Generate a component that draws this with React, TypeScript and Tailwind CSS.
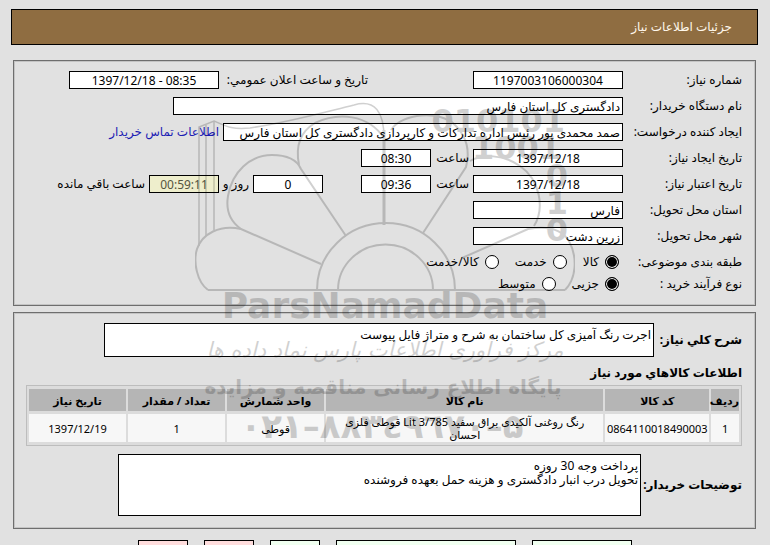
import type { ReactNode } from "react";

const box = "h-[18px] border border-black bg-white px-0.5 leading-4 outline-none";
const area =
  "block resize-none overflow-hidden border border-black bg-white px-0.5 py-1 leading-[14px] outline-none";
const panel =
  "mx-0.5 border border-[#6e6e6e] px-3 pt-[10px] shadow-[inset_0_0_0_1px_#c4c4c4]";

const Row = ({ id, label, children }: { id: string; label: string; children: ReactNode }) => (
  <div className="flex h-[18px] items-center gap-1 whitespace-nowrap">
    <label htmlFor={id} className="w-[115px] shrink-0">
      {label}
    </label>
    {children}
  </div>
);

const Radios = ({ title, name, options }: { title: string; name: string; options: string[] }) => (
  <div role="radiogroup" aria-label={title} className="flex h-[18px] items-center whitespace-nowrap">
    <span className="w-[123px] shrink-0">{title}</span>
    <div className="flex gap-4">
      {options.map((option, i) => (
        <label key={option} className="flex items-center gap-1.5">
          <input
            type="radio"
            name={name}
            defaultChecked={i === 0}
            className="size-[14px] appearance-none rounded-full border border-black bg-white checked:bg-black checked:shadow-[inset_0_0_0_1px_#fff]"
          />
          {option}
        </label>
      ))}
    </div>
  </div>
);

const Watermark = () => (
  <svg
    aria-hidden="true"
    direction="ltr"
    className="pointer-events-none absolute left-1/2 top-[95px] -translate-x-1/2 font-['DejaVu_Sans',sans-serif] opacity-[0.18]"
    width="380"
    height="360"
    viewBox="195 95 380 360"
  >
    <g fill="none" stroke="#000" strokeWidth="2">
      <path d="M317 290a67 65 0 0 1 138 0M338 290a47 45 0 0 1 95 0M208 290H565" />
      <path
        d="M384 138C384 112 375 99 354 105C325 112 290 122 250 128C230 130 224 125 214 121L199 127V246M206 124V236M214 122V230"
        strokeWidth="1.5"
      />
      <path d="M384 130V225" strokeWidth="3" />
      <path d="M208 290C197 282 193 262 197 249C202 234 220 224 241 229L321 264" />
      <path d="M241 229C228 220 226 208 228 196C232 172 250 155 272 155C287 155 297 160 301 169L346 236" />
      <path d="M299 165C296 150 298 133 315 123C338 112 368 114 384 138" />
      <path d="M391 130C402 113 440 110 455 125C467 137 470 152 466 167L423 233" />
      <path d="M470 161C482 154 503 154 520 166C540 180 545 208 534 226" />
      <path d="M462 258L528 229C545 226 561 228 569 241C578 258 576 279 565 290" />
    </g>
    <g fill="#000" fontWeight="bold">
      <text x="565" y="132" fontSize="32" textAnchor="end">010101</text>
      <text x="561" y="159" fontSize="32" textAnchor="end">1001</text>
      <text x="568" y="187" fontSize="32" textAnchor="end">0</text>
      <text x="568" y="214" fontSize="32" textAnchor="end">1</text>
      <text x="568" y="241" fontSize="32" textAnchor="end">0</text>
      <text x="385" y="318" fontSize="36" textAnchor="middle">ParsNamadData</text>
      <text x="385" y="357" fontSize="21" fontWeight="normal" fontStyle="italic" textAnchor="middle">
        مرکز فرآوری اطلاعات پارس نماد داده ها
      </text>
      <text x="383" y="394" fontSize="20" textAnchor="middle">
        پایگاه اطلاع رسانی مناقصه و مزایده
      </text>
      <text x="382" y="438" fontSize="34" textAnchor="middle">۰۲۱–۸۸۳٤۹٦۷۰–۵</text>
    </g>
  </svg>
);

const columns = [
  { title: "ردیف", value: "1", width: "w-[4%]", pad: "p-0" },
  { title: "کد کالا", value: "0864110018490003", width: "w-[15%]", pad: "p-0" },
  { title: "نام کالا", value: "رنگ روغنی آلکیدی براق سفید 3/785 Lit قوطی فلزی احسان", width: "w-[40%]", pad: "px-4 py-0" },
  { title: "واحد شمارش", value: "قوطی", width: "w-[14%]", pad: "p-0" },
  { title: "تعداد / مقدار", value: "1", width: "w-[14%]", pad: "p-0" },
  { title: "تاریخ نیاز", value: "1397/12/19", width: "w-[14%]", pad: "p-0" },
];

const buttons = [
  { text: "پاسخ به نیاز", style: "w-[100px] bg-[#f0fff0]" },
  { text: "مشاهده مدارک پیوستی (0)", style: "w-[180px] bg-[#f0fff0]" },
  { text: "چاپ", style: "w-[50px] bg-[#f0fff0]" },
  { text: "بازگشت", style: "w-[50px] bg-[#ffdddd]" },
  { text: "خروج", style: "w-[50px] bg-[#ffdddd]" },
];

export default function App() {
  return (
    <main
      dir="rtl"
      lang="fa"
      className="relative h-screen overflow-hidden bg-[#e1e1e1] ps-3 pe-[11px] pt-[9px] font-['Noto_Sans','DejaVu_Sans',sans-serif] text-[12px] leading-4 text-black"
    >
      <h1 className="border border-black bg-[#8f6d41] px-[25px] py-[9px] text-[#fff8ec]">
        جزئیات اطلاعات نیاز
      </h1>

      <section className={`${panel} mt-[15px] flex flex-col gap-2 ps-[13px] pb-3`}>
        <Row id="number" label="شماره نیاز:">
          <input id="number" className={`${box} w-[150px] text-center`} defaultValue="1197003106000304" />
          <label htmlFor="announced" className="ms-[101px] w-[145px]">
            تاریخ و ساعت اعلان عمومي:
          </label>
          <input id="announced" dir="ltr" className={`${box} w-[150px] text-center`} defaultValue="1397/12/18 - 08:35" />
        </Row>
        <Row id="buyer" label="نام دستگاه خریدار:">
          <input id="buyer" className={`${box} w-[450px]`} defaultValue="دادگستری کل استان فارس" />
        </Row>
        <Row id="creator" label="ایجاد کننده درخواست:">
          <input
            id="creator"
            className={`${box} w-[400px]`}
            defaultValue="صمد محمدی پور رئیس اداره تدارکات و کارپردازی دادگستری کل استان فارس"
          />
          <a href="#contact" className="text-[#1c1cb4]">
            اطلاعات تماس خریدار
          </a>
        </Row>
        <Row id="created" label="تاریخ ایجاد نیاز:">
          <input id="created" className={`${box} w-[150px] text-center`} defaultValue="1397/12/18" />
          <label htmlFor="createdTime" className="w-[34px]">ساعت</label>
          <input id="createdTime" className={`${box} w-[70px] text-center`} defaultValue="08:30" />
        </Row>
        <Row id="expires" label="تاریخ اعتبار نیاز:">
          <input id="expires" className={`${box} w-[150px] text-center`} defaultValue="1397/12/18" />
          <label htmlFor="expiresTime" className="w-[34px]">ساعت</label>
          <input id="expiresTime" className={`${box} w-[70px] text-center`} defaultValue="09:36" />
          <input id="days" className={`${box} ms-[34px] w-[70px] text-center`} defaultValue="0" />
          <label htmlFor="days" className="w-[26px]">روز و</label>
          <input
            id="remaining"
            className="h-[18px] w-[70px] border border-black bg-[#eeeecc] px-0.5 text-center leading-4 text-[#55553f] outline-none"
            defaultValue="00:59:11"
          />
          <label htmlFor="remaining">ساعت باقي مانده</label>
        </Row>
        <Row id="province" label="استان محل تحویل:">
          <input id="province" className={`${box} w-[150px]`} defaultValue="فارس" />
        </Row>
        <Row id="city" label="شهر محل تحویل:">
          <input id="city" className={`${box} w-[150px]`} defaultValue="زرین دشت" />
        </Row>
        <div className="flex flex-col gap-1">
          <Radios title="طبقه بندی موضوعی:" name="category" options={["کالا", "خدمت", "کالا/خدمت"]} />
          <Radios title="نوع فرآیند خرید :" name="process" options={["جزیی", "متوسط"]} />
        </div>
      </section>

      <section className={`${panel} mt-1.5 ps-[13px] pb-3`}>
        <div className="flex items-center">
          <label htmlFor="summary" className="w-[88px] font-bold whitespace-nowrap">
            شرح کلي نیاز:
          </label>
          <textarea
            id="summary"
            className={`${area} h-[34px] w-[550px]`}
            defaultValue="اجرت رنگ آمیزی کل ساختمان به شرح و متراژ فایل پیوست"
          />
        </div>
        <h2 className="pt-2 pb-1 font-bold">اطلاعات کالاهاي مورد نیاز</h2>
        <table className="w-full table-fixed border-separate border-spacing-x-[2px] border-spacing-y-[3px] border border-[#bdbdbd] bg-[#dcdcdc] text-center text-[11px] leading-[13px]">
          <thead>
            <tr className="h-[22px]">
              {columns.map((c) => (
                <th key={c.title} className={`${c.width} bg-[#b5b5b5] p-0 whitespace-nowrap`}>
                  {c.title}
                </th>
              ))}
            </tr>
          </thead>
          <tbody>
            <tr className="h-7">
              {columns.map((c) => (
                <td key={c.title} className={`${c.pad} bg-[#f7f7f7]`}>
                  {c.value}
                </td>
              ))}
            </tr>
          </tbody>
        </table>
        <div className="mt-2 flex items-center">
          <label htmlFor="notes" className="w-[101px] font-bold whitespace-nowrap">
            توضیحات خریدار:
          </label>
          <textarea
            id="notes"
            className={`${area} h-[62px] w-[523px]`}
            defaultValue={"پرداخت وجه 30 روزه\nتحویل درب انبار دادگستری و هزینه حمل بعهده فروشنده"}
          />
        </div>
      </section>

      <div className="mt-[11px] flex justify-center gap-4">
        {buttons.map((b) => (
          <button key={b.text} type="button" className={`${b.style} h-6 border border-black`}>
            {b.text}
          </button>
        ))}
      </div>

      <Watermark />
    </main>
  );
}
